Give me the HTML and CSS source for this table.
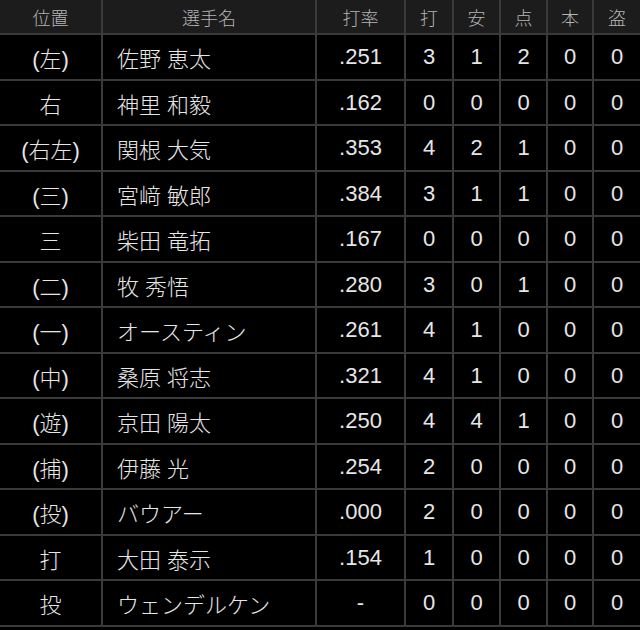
FILE: index.html
```html
<!DOCTYPE html>
<html lang="ja">
<head>
<meta charset="utf-8">
<link rel="stylesheet" href="styles.css">
</head>
<body>
<div class="board">
  <div class="grid">
    <div class="h">位置</div><div class="h">選手名</div><div class="h">打率</div><div class="h">打</div><div class="h">安</div><div class="h">点</div><div class="h">本</div><div class="h">盗</div>

    <div class="c">(左)</div><div class="c name">佐野 恵太</div><div class="c">.251</div><div class="c">3</div><div class="c">1</div><div class="c">2</div><div class="c">0</div><div class="c">0</div>
    <div class="c">右</div><div class="c name">神里 和毅</div><div class="c">.162</div><div class="c">0</div><div class="c">0</div><div class="c">0</div><div class="c">0</div><div class="c">0</div>
    <div class="c">(右左)</div><div class="c name">関根 大気</div><div class="c">.353</div><div class="c">4</div><div class="c">2</div><div class="c">1</div><div class="c">0</div><div class="c">0</div>
    <div class="c">(三)</div><div class="c name">宮﨑 敏郎</div><div class="c">.384</div><div class="c">3</div><div class="c">1</div><div class="c">1</div><div class="c">0</div><div class="c">0</div>
    <div class="c">三</div><div class="c name">柴田 竜拓</div><div class="c">.167</div><div class="c">0</div><div class="c">0</div><div class="c">0</div><div class="c">0</div><div class="c">0</div>
    <div class="c">(二)</div><div class="c name">牧 秀悟</div><div class="c">.280</div><div class="c">3</div><div class="c">0</div><div class="c">1</div><div class="c">0</div><div class="c">0</div>
    <div class="c">(一)</div><div class="c name">オースティン</div><div class="c">.261</div><div class="c">4</div><div class="c">1</div><div class="c">0</div><div class="c">0</div><div class="c">0</div>
    <div class="c">(中)</div><div class="c name">桑原 将志</div><div class="c">.321</div><div class="c">4</div><div class="c">1</div><div class="c">0</div><div class="c">0</div><div class="c">0</div>
    <div class="c">(遊)</div><div class="c name">京田 陽太</div><div class="c">.250</div><div class="c">4</div><div class="c">4</div><div class="c">1</div><div class="c">0</div><div class="c">0</div>
    <div class="c">(捕)</div><div class="c name">伊藤 光</div><div class="c">.254</div><div class="c">2</div><div class="c">0</div><div class="c">0</div><div class="c">0</div><div class="c">0</div>
    <div class="c">(投)</div><div class="c name">バウアー</div><div class="c">.000</div><div class="c">2</div><div class="c">0</div><div class="c">0</div><div class="c">0</div><div class="c">0</div>
    <div class="c">打</div><div class="c name">大田 泰示</div><div class="c">.154</div><div class="c">1</div><div class="c">0</div><div class="c">0</div><div class="c">0</div><div class="c">0</div>
    <div class="c">投</div><div class="c name">ウェンデルケン</div><div class="c">-</div><div class="c">0</div><div class="c">0</div><div class="c">0</div><div class="c">0</div><div class="c">0</div>
  </div>
</div>
</body>
</html>
```
FILE: styles.css
```css
html, body {
  margin: 0;
  padding: 0;
  background: #000;
}
.board {
  width: 640px;
  height: 630px;
  background: #000;
  font-family: "Liberation Sans", "Noto Sans CJK JP", sans-serif;
  font-weight: 300;
}
.grid {
  display: grid;
  grid-template-columns: 101px 212px 87px 46px 45px 45px 44px 46px;
  grid-template-rows: 33px;
  grid-auto-rows: 43.5px;
  column-gap: 2px;
  row-gap: 2px;
  background: #3a3a3a;
  padding-bottom: 2px;
}
.h {
  background: #1c1c1c;
  color: #b4b4b4;
  font-size: 18px;
  display: flex;
  align-items: center;
  justify-content: center;
  padding-top: 1px;
}
.c {
  background: #000;
  color: #e6e6e6;
  font-size: 22px;
  display: flex;
  align-items: center;
  justify-content: center;
  padding-top: 1px;
}
.c.name {
  justify-content: flex-start;
  padding-left: 14px;
}
```
